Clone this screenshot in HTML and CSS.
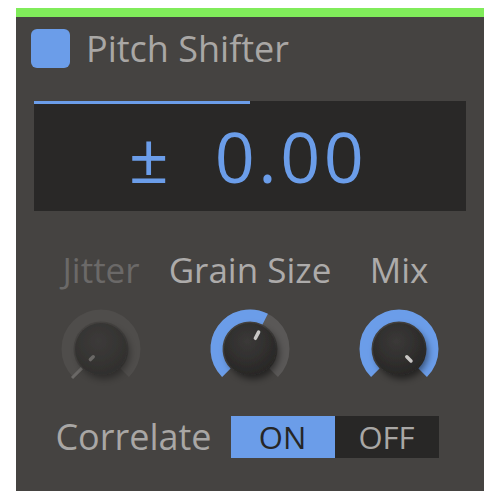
FILE: index.html
```html
<!DOCTYPE html>
<html>
<head>
<meta charset="utf-8">
<link rel="stylesheet" href="styles.css">
</head>
<body>
<div class="panel">
  <div class="header">
    <div class="power"></div>
    <div class="title">Pitch Shifter</div>
  </div>
  <div class="display">
    <div class="display-bar"><div class="display-fill" style="width:50%"></div></div>
    <div class="display-value"><span class="pm">±</span><span class="num">0.00</span></div>
  </div>
  <div class="knobs">
    <div class="knob disabled">
      <div class="label">Jitter</div>
      <svg class="dial" width="90" height="90" viewBox="0 0 90 90">
        <defs>
          <filter id="sh1" x="-50%" y="-50%" width="200%" height="200%">
            <feDropShadow dx="3" dy="4" stdDeviation="3.5" flood-color="#000" flood-opacity="0.45"/>
          </filter>
          <radialGradient id="kg1" cx="45%" cy="35%" r="70%">
            <stop offset="0" stop-color="#3a3837"/>
            <stop offset="1" stop-color="#2a2928"/>
          </radialGradient>
        </defs>
        <path d="M21.31 68.69 A33.5 33.5 0 1 1 68.69 68.69" fill="none" stroke="#4f4d4b" stroke-width="12"/>
        <line x1="25.9" y1="64.1" x2="16.0" y2="74.0" stroke="#6a6866" stroke-width="3"/>
        <circle cx="45" cy="45" r="26" fill="url(#kg1)" filter="url(#sh1)" opacity="0.75"/>
        <line x1="37.2" y1="52.8" x2="34.4" y2="55.6" stroke="#6a6866" stroke-width="3.5" stroke-linecap="round"/>
      </svg>
    </div>
    <div class="knob">
      <div class="label">Grain Size</div>
      <svg class="dial" width="90" height="90" viewBox="0 0 90 90">
        <defs>
          <filter id="sh2" x="-50%" y="-50%" width="200%" height="200%">
            <feDropShadow dx="3" dy="4" stdDeviation="3.5" flood-color="#000" flood-opacity="0.5"/>
          </filter>
          <radialGradient id="kg2" cx="45%" cy="35%" r="70%">
            <stop offset="0" stop-color="#3b3938"/>
            <stop offset="1" stop-color="#272625"/>
          </radialGradient>
        </defs>
        <path d="M21.31 68.69 A33.5 33.5 0 1 1 68.69 68.69" fill="none" stroke="#5a5857" stroke-width="12"/>
        <path d="M21.31 68.69 A33.5 33.5 0 0 1 60.21 15.15" fill="none" stroke="#6b9de9" stroke-width="12"/>
        <circle cx="45" cy="45" r="26" fill="url(#kg2)" filter="url(#sh2)"/>
        <line x1="50.4" y1="34.3" x2="53.6" y2="28.1" stroke="#c9c7c5" stroke-width="3.5" stroke-linecap="round"/>
      </svg>
    </div>
    <div class="knob">
      <div class="label">Mix</div>
      <svg class="dial" width="90" height="90" viewBox="0 0 90 90">
        <defs>
          <filter id="sh3" x="-50%" y="-50%" width="200%" height="200%">
            <feDropShadow dx="3" dy="4" stdDeviation="3.5" flood-color="#000" flood-opacity="0.5"/>
          </filter>
          <radialGradient id="kg3" cx="45%" cy="35%" r="70%">
            <stop offset="0" stop-color="#3b3938"/>
            <stop offset="1" stop-color="#272625"/>
          </radialGradient>
        </defs>
        <path d="M21.31 68.69 A33.5 33.5 0 1 1 68.69 68.69" fill="none" stroke="#6b9de9" stroke-width="12"/>
        <circle cx="45" cy="45" r="26" fill="url(#kg3)" filter="url(#sh3)"/>
        <line x1="52.8" y1="52.8" x2="57.0" y2="57.0" stroke="#c9c7c5" stroke-width="3.5" stroke-linecap="round"/>
      </svg>
    </div>
  </div>
  <div class="correlate">
    <div class="corr-label">Correlate</div>
    <div class="toggle">
      <div class="opt on">ON</div>
      <div class="opt off">OFF</div>
    </div>
  </div>
</div>
</body>
</html>
```

FILE: styles.css
```css
html, body {
  margin: 0;
  padding: 0;
  background: #ffffff;
}
body {
  padding: 8px 16px 0 16px;
  font-family: "Open Sans", "DejaVu Sans", sans-serif;
}
.panel {
  width: 468px;
  height: 474px;
  background: #454341;
  border-top: 9px solid #80ec5a;
  display: flex;
  flex-direction: column;
}
.header {
  display: flex;
  align-items: center;
  margin: 12px 0 0 15px;
  height: 39px;
}
.power {
  width: 39px;
  height: 39px;
  border-radius: 6px;
  background: #6b9de9;
}
.title {
  margin-left: 16px;
  font-size: 36px;
  line-height: 39px;
  color: #a9a7a5;
}
.display {
  margin: 33px 18px 0 18px;
  height: 110px;
  background: #292827;
  display: flex;
  flex-direction: column;
}
.display-bar {
  height: 3px;
}
.display-fill {
  height: 3px;
  background: #6b9de9;
}
.display-value {
  flex: 1;
  display: flex;
  justify-content: center;
  align-items: center;
  padding: 0 4px 3px 0;
  color: #6b9de9;
  font-size: 70px;
  line-height: 70px;
}
.pm {
  margin-right: 46px;
}
.num {
  letter-spacing: 3.5px;
}
.knobs {
  margin-top: 39px;
  display: grid;
  grid-template-columns: repeat(3, 149px);
  justify-content: center;
}
.knob {
  display: flex;
  flex-direction: column;
  align-items: center;
}
.label {
  font-size: 35px;
  line-height: 40px;
  color: #adabaa;
  white-space: nowrap;
}
.knob.disabled .label {
  color: #6b6968;
}
.dial {
  display: block;
  margin-top: 14px;
}
.correlate {
  margin-top: 22px;
  display: flex;
  align-items: center;
  justify-content: center;
  gap: 19px;
  padding-right: 6px;
}
.corr-label {
  font-size: 36px;
  line-height: 42px;
  color: #a9a7a5;
}
.toggle {
  display: flex;
  height: 42px;
}
.opt {
  width: 104px;
  height: 42px;
  display: flex;
  align-items: center;
  justify-content: center;
  font-size: 31px;
}
.opt.on {
  background: #6b9de9;
  color: #262626;
}
.opt.off {
  background: #282726;
  color: #a9a7a5;
}
```
